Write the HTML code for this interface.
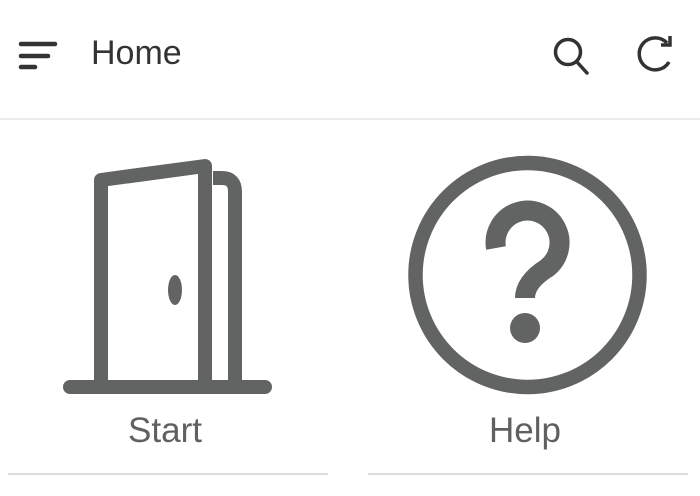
<!DOCTYPE html>
<html><head><meta charset="utf-8"><style>
html,body{margin:0;padding:0;background:#fff;width:700px;height:496px;overflow:hidden;font-family:"Liberation Sans",sans-serif}
.t{position:absolute;white-space:nowrap}
</style></head><body>
<svg width="700" height="496" style="position:absolute;left:0;top:0">
<g stroke="#333" stroke-width="4.5" stroke-linecap="round">
<line x1="21" y1="44" x2="55" y2="44"/>
<line x1="21" y1="56" x2="48" y2="56"/>
<line x1="21" y1="67" x2="35" y2="67"/>
</g>
<g fill="none" stroke="#333" stroke-width="3.5">
<circle cx="568" cy="52" r="12.5"/>
<line x1="577" y1="62" x2="587" y2="73" stroke-linecap="round"/>
<path d="M667,43 A16,16 0 1 0 669,62"/>
<path d="M670,36 V45 H661"/>
</g>
<rect x="0" y="118" width="700" height="2" fill="#ececec"/>
<g fill="none" stroke="#626463" stroke-width="14" stroke-linejoin="round">
<path d="M101,382 V180 L205,166 V382"/>
<path d="M213,178 H222 Q235,178 235,192 V382"/>
<line x1="70" y1="387" x2="265" y2="387" stroke-linecap="round"/>
<circle cx="527.5" cy="275" r="112" stroke-width="14.5"/>
<path d="M496,248 A32,32 0 1 1 547,268 Q525,282 525,298" stroke-width="20" stroke-linejoin="miter"/>
</g>
<ellipse cx="175" cy="290" rx="7" ry="15" fill="#626463"/>
<circle cx="525" cy="328" r="15" fill="#626463"/>
<rect x="8" y="473" width="320" height="2" fill="#dcdcdc"/>
<rect x="368" y="473" width="320" height="2" fill="#dcdcdc"/>
</svg>
<div class="t" style="left:91px;top:34px;font-size:34px;color:#333">Home</div>
<div class="t" style="left:165px;top:411px;font-size:35px;color:#5f6161;transform:translateX(-50%)">Start</div>
<div class="t" style="left:525px;top:411px;font-size:35px;color:#5f6161;transform:translateX(-50%)">Help</div>
</body></html>
